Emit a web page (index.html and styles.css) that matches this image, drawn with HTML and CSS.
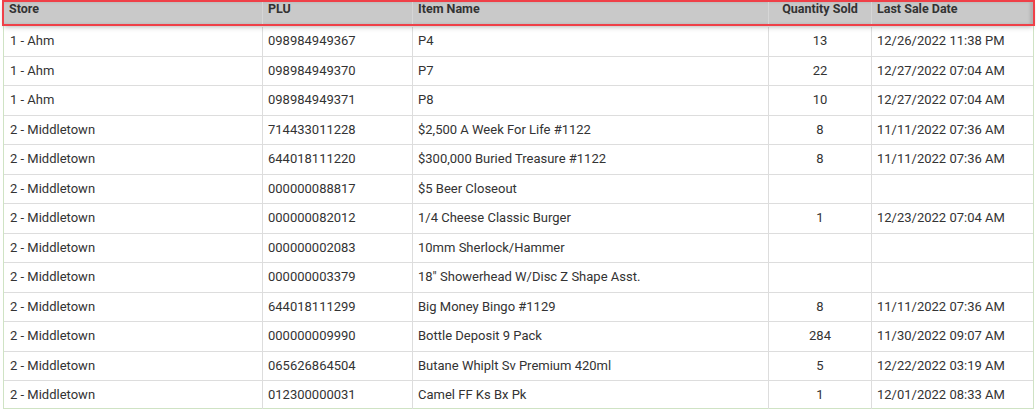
FILE: index.html
```html
<!DOCTYPE html>
<html>
<head>
<meta charset="utf-8">
<link rel="stylesheet" href="styles.css">
</head>
<body>
<div class="grid">
  <div class="head">
    <div class="hc">Store</div>
    <div class="hc">PLU</div>
    <div class="hc">Item Name</div>
    <div class="hc num">Quantity Sold</div>
    <div class="hc">Last Sale Date</div>
  </div>
  <div class="rows">
    <div class="row"><div class="c first">1 - Ahm</div><div class="c">098984949367</div><div class="c">P4</div><div class="c num">13</div><div class="c">12/26/2022 11:38 PM</div></div>
    <div class="row"><div class="c first">1 - Ahm</div><div class="c">098984949370</div><div class="c">P7</div><div class="c num">22</div><div class="c">12/27/2022 07:04 AM</div></div>
    <div class="row"><div class="c first">1 - Ahm</div><div class="c">098984949371</div><div class="c">P8</div><div class="c num">10</div><div class="c">12/27/2022 07:04 AM</div></div>
    <div class="row"><div class="c first">2 - Middletown</div><div class="c">714433011228</div><div class="c">$2,500 A Week For Life #1122</div><div class="c num">8</div><div class="c">11/11/2022 07:36 AM</div></div>
    <div class="row"><div class="c first">2 - Middletown</div><div class="c">644018111220</div><div class="c">$300,000 Buried Treasure #1122</div><div class="c num">8</div><div class="c">11/11/2022 07:36 AM</div></div>
    <div class="row"><div class="c first">2 - Middletown</div><div class="c">000000088817</div><div class="c">$5 Beer Closeout</div><div class="c num"></div><div class="c"></div></div>
    <div class="row"><div class="c first">2 - Middletown</div><div class="c">000000082012</div><div class="c">1/4 Cheese Classic Burger</div><div class="c num">1</div><div class="c">12/23/2022 07:04 AM</div></div>
    <div class="row"><div class="c first">2 - Middletown</div><div class="c">000000002083</div><div class="c">10mm Sherlock/Hammer</div><div class="c num"></div><div class="c"></div></div>
    <div class="row"><div class="c first">2 - Middletown</div><div class="c">000000003379</div><div class="c">18" Showerhead W/Disc Z Shape Asst.</div><div class="c num"></div><div class="c"></div></div>
    <div class="row"><div class="c first">2 - Middletown</div><div class="c">644018111299</div><div class="c">Big Money Bingo #1129</div><div class="c num">8</div><div class="c">11/11/2022 07:36 AM</div></div>
    <div class="row"><div class="c first">2 - Middletown</div><div class="c">000000009990</div><div class="c">Bottle Deposit 9 Pack</div><div class="c num">284</div><div class="c">11/30/2022 09:07 AM</div></div>
    <div class="row"><div class="c first">2 - Middletown</div><div class="c">065626864504</div><div class="c">Butane Whiplt Sv Premium 420ml</div><div class="c num">5</div><div class="c">12/22/2022 03:19 AM</div></div>
    <div class="row"><div class="c first">2 - Middletown</div><div class="c">012300000031</div><div class="c">Camel FF Ks Bx Pk</div><div class="c num">1</div><div class="c">12/01/2022 08:33 AM</div></div>
  </div>
</div>
</body>
</html>
```

FILE: styles.css
```css
html, body {
  margin: 0;
  padding: 0;
  background: #ffffff;
  font-family: Roboto, "Liberation Sans", sans-serif;
  color: #333333;
  overflow: hidden;
}

.grid {
  width: 1029px;
  height: 406px;
  margin-left: 3px;
  border-left: 1px solid #cfe3c4;
  border-right: 1px solid #cfe3c4;
  border-bottom: 1px solid #cfe3c4;
}

.head,
.row {
  display: grid;
  grid-template-columns: 259px 150px 356px 103px 161px;
}

.head {
  position: relative;
  z-index: 2;
  height: 22px;
  margin-top: 2px;
  margin-bottom: 3px;
  background: #c9c9c9;
  outline: 2px solid #ef4048;
  box-shadow: 0 3px 5px rgba(0, 0, 0, 0.28), inset -3px 0 3px rgba(0, 0, 0, 0.12);
  font-size: 12.5px;
  font-weight: 700;
  color: #333333;
}

.hc {
  padding: 0 5px;
  line-height: 13px;
  border-right: 1px solid #d6d6d6;
  white-space: nowrap;
}

.hc:last-child {
  border-right: none;
}

.rows {
  position: relative;
  z-index: 1;
}

.row {
  height: 29.5px;
  box-sizing: border-box;
  border-bottom: 1px solid #dddddd;
  font-size: 13px;
}

.c {
  padding: 0 5px;
  line-height: 28.5px;
  border-right: 1px solid #dddddd;
  white-space: nowrap;
}

.c.first {
  padding-left: 6px;
}

.c:last-child {
  border-right: none;
}

.num {
  text-align: center;
}
```
